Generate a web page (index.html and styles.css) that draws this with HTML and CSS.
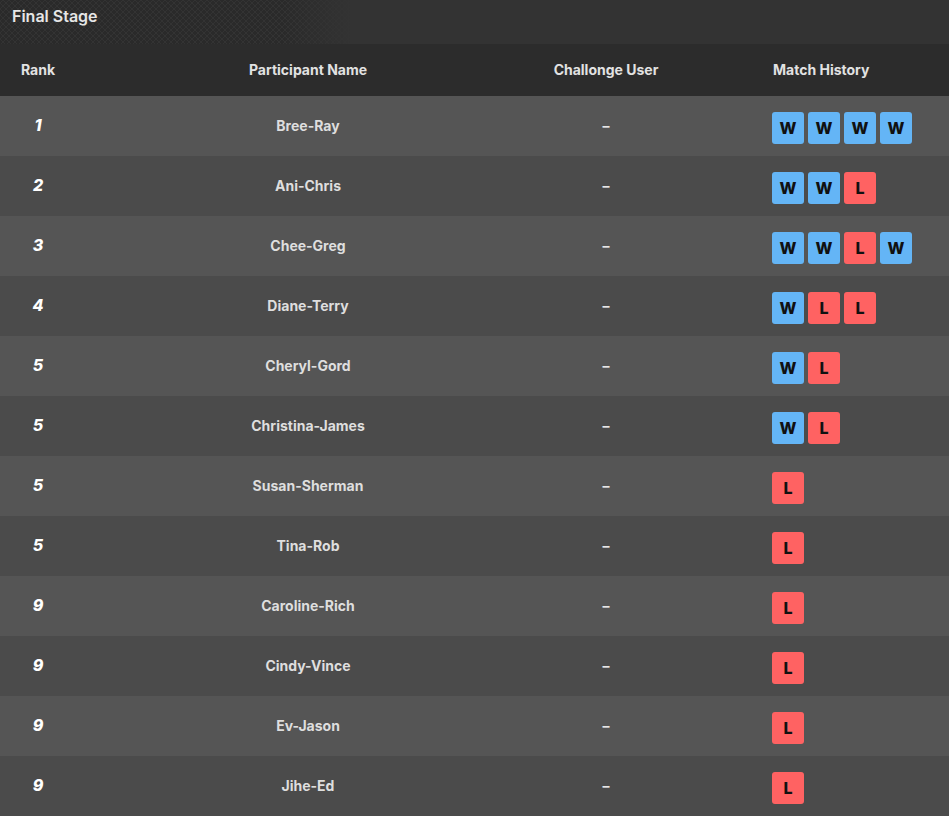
FILE: index.html
```html
<!DOCTYPE html>
<html>
<head>
<meta charset="utf-8">
<link rel="stylesheet" href="styles.css">
</head>
<body>
<div class="panel">
  <div class="title-bar"><span class="title">Final Stage</span></div>
  <div class="table">
    <div class="row head">
      <div class="c rank">Rank</div>
      <div class="c name">Participant Name</div>
      <div class="c user">Challonge User</div>
      <div class="c hist">Match History</div>
    </div>
    <div class="row odd"><div class="c rank">1</div><div class="c name">Bree-Ray</div><div class="c user">–</div><div class="c hist"><span class="b w">W</span><span class="b w">W</span><span class="b w">W</span><span class="b w">W</span></div></div>
    <div class="row even"><div class="c rank">2</div><div class="c name">Ani-Chris</div><div class="c user">–</div><div class="c hist"><span class="b w">W</span><span class="b w">W</span><span class="b l">L</span></div></div>
    <div class="row odd"><div class="c rank">3</div><div class="c name">Chee-Greg</div><div class="c user">–</div><div class="c hist"><span class="b w">W</span><span class="b w">W</span><span class="b l">L</span><span class="b w">W</span></div></div>
    <div class="row even"><div class="c rank">4</div><div class="c name">Diane-Terry</div><div class="c user">–</div><div class="c hist"><span class="b w">W</span><span class="b l">L</span><span class="b l">L</span></div></div>
    <div class="row odd"><div class="c rank">5</div><div class="c name">Cheryl-Gord</div><div class="c user">–</div><div class="c hist"><span class="b w">W</span><span class="b l">L</span></div></div>
    <div class="row even"><div class="c rank">5</div><div class="c name">Christina-James</div><div class="c user">–</div><div class="c hist"><span class="b w">W</span><span class="b l">L</span></div></div>
    <div class="row odd"><div class="c rank">5</div><div class="c name">Susan-Sherman</div><div class="c user">–</div><div class="c hist"><span class="b l">L</span></div></div>
    <div class="row even"><div class="c rank">5</div><div class="c name">Tina-Rob</div><div class="c user">–</div><div class="c hist"><span class="b l">L</span></div></div>
    <div class="row odd"><div class="c rank">9</div><div class="c name">Caroline-Rich</div><div class="c user">–</div><div class="c hist"><span class="b l">L</span></div></div>
    <div class="row even"><div class="c rank">9</div><div class="c name">Cindy-Vince</div><div class="c user">–</div><div class="c hist"><span class="b l">L</span></div></div>
    <div class="row odd"><div class="c rank">9</div><div class="c name">Ev-Jason</div><div class="c user">–</div><div class="c hist"><span class="b l">L</span></div></div>
    <div class="row even"><div class="c rank">9</div><div class="c name">Jihe-Ed</div><div class="c user">–</div><div class="c hist"><span class="b l">L</span></div></div>
  </div>
</div>
</body>
</html>
```
FILE: styles.css
```css
* { box-sizing: border-box; }
html, body {
  margin: 0;
  padding: 0;
  background: #4b4b4b;
  font-family: Inter, "Noto Sans", "Liberation Sans", sans-serif;
}
.panel { width: 949px; }
.title-bar {
  position: relative;
  height: 44px;
  background: #333333;
  padding: 6px 0 0 12px;
  overflow: hidden;
}
.title-bar::before {
  content: "";
  position: absolute;
  left: 0; top: 0; bottom: 0;
  width: 350px;
  background-image:
    radial-gradient(circle at 3px 3px, #2a2a2a 1.6px, transparent 2px),
    radial-gradient(circle at 3px 3px, #2a2a2a 1.6px, transparent 2px);
  background-size: 6px 6px, 6px 6px;
  background-position: 0 0, 3px 3px;
  -webkit-mask-image: linear-gradient(to right, #000 80%, transparent 100%);
  mask-image: linear-gradient(to right, #000 80%, transparent 100%);
}
.title {
  position: relative;
  color: #e6e6e6;
  font-size: 16px;
  font-weight: 600;
}
.row {
  display: grid;
  grid-template-columns: 76px 464px 132px 1fr;
  align-items: center;
  height: 60px;
}
.row.head {
  height: 52px;
  background: #2c2c2c;
  color: #e2e2e2;
  font-size: 14px;
  font-weight: 700;
  padding-bottom: 1px;
}
.row.odd { background: #555555; }
.row.even { background: #4b4b4b; }
.c { text-align: center; }
.c.hist {
  text-align: left;
  padding-left: 100px;
  display: flex;
  gap: 4px;
}
.row.odd .hist, .row.even .hist { margin-top: 4px; }
.head .c.hist { padding-left: 101px; }
.row.odd .rank, .row.even .rank {
  color: #ffffff;
  font-size: 16px;
  font-weight: 800;
  font-style: italic;
  padding-bottom: 2px;
}
.row.odd .name, .row.even .name {
  color: #dedede;
  font-size: 14px;
  font-weight: 700;
  padding-bottom: 1px;
}
.row.odd .user, .row.even .user {
  color: #e6e6e6;
  font-size: 14px;
  font-weight: 700;
  padding-bottom: 2px;
}
.b {
  width: 32px;
  height: 32px;
  border-radius: 3px;
  display: flex;
  align-items: center;
  justify-content: center;
  color: #111;
  font-size: 16px;
  font-weight: 800;
}
.b.w { background: #64b5f6; }
.b.l { background: #ff6262; }
```
